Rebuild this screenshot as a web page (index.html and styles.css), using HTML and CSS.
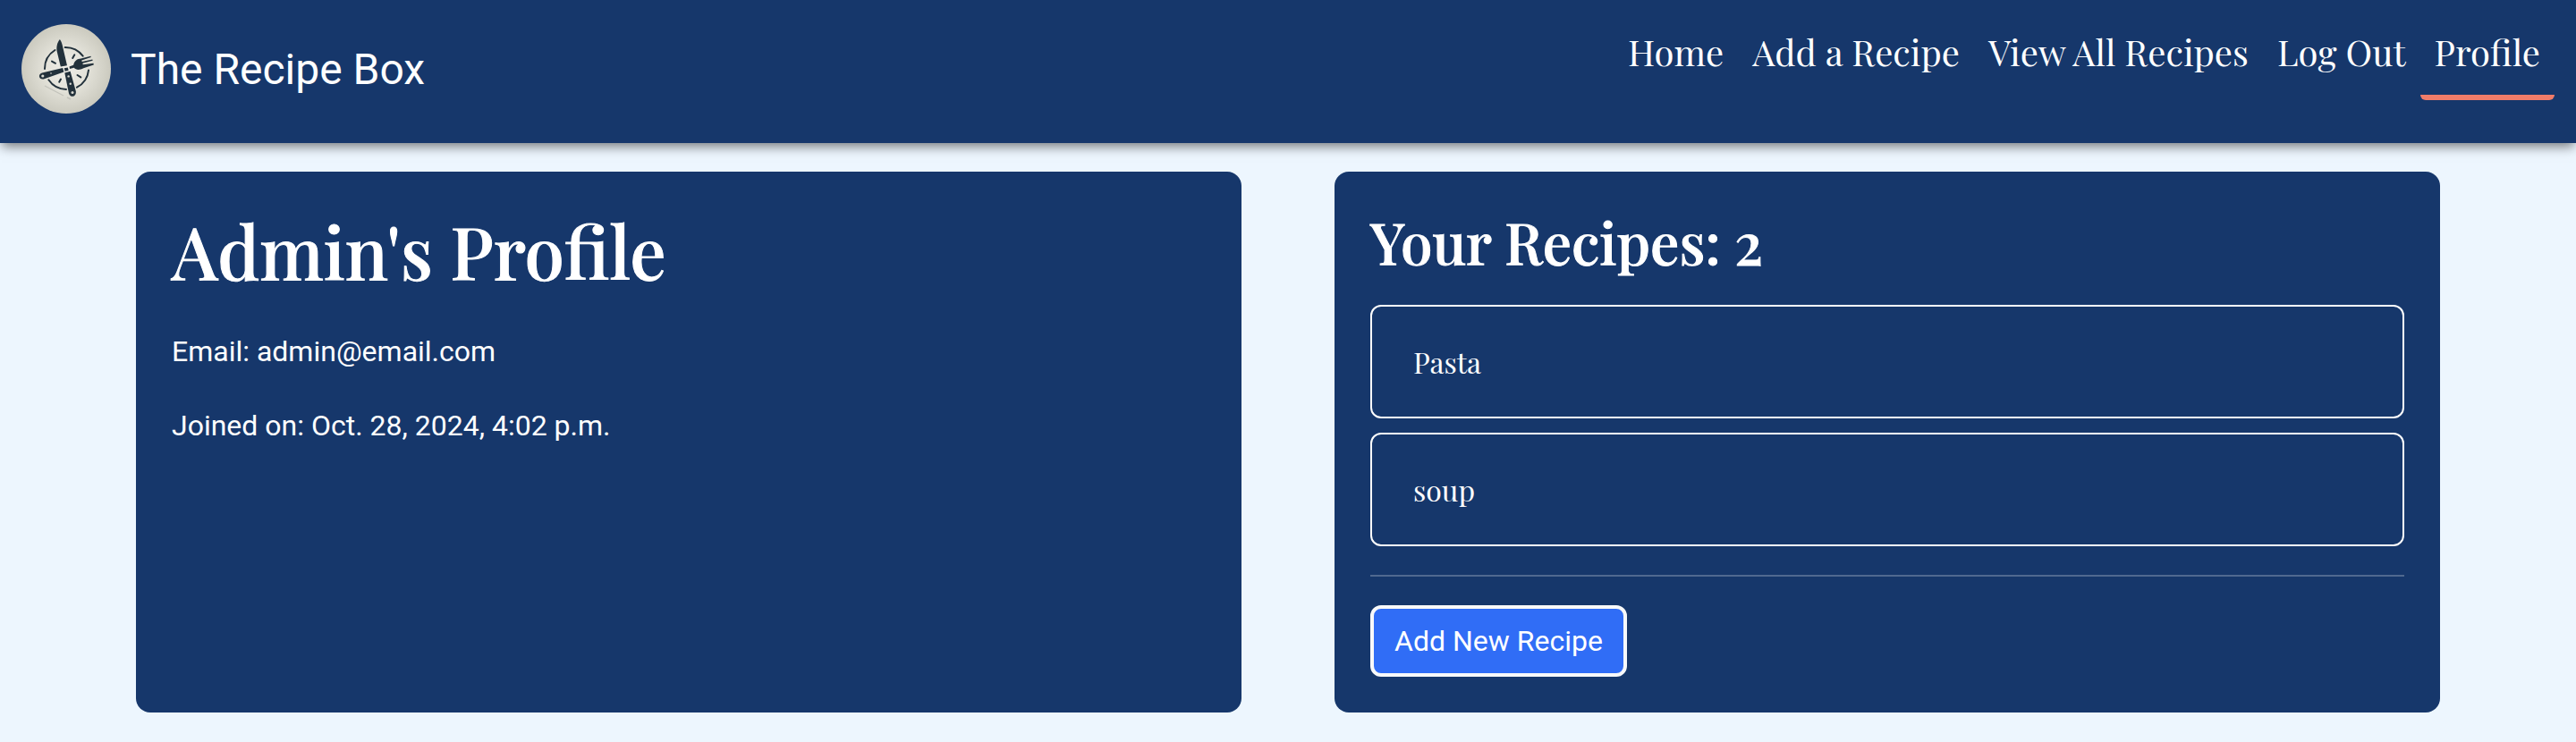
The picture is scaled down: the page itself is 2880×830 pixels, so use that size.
FILE: index.html
```html
<!DOCTYPE html>
<html lang="en">
<head>
  <meta charset="utf-8">
  <meta name="viewport" content="width=device-width, initial-scale=1">
  <title>The Recipe Box</title>
  <link rel="stylesheet" href="styles.css">
</head>
<body>
  <header class="navbar">
    <a class="brand" href="#">
      <svg class="brand-logo" viewBox="0 0 100 100" aria-hidden="true">
        <defs>
          <radialGradient id="disc">
            <stop offset="0" stop-color="#efeee8"/>
            <stop offset="0.5" stop-color="#e2e1d8"/>
            <stop offset="1" stop-color="#cbcabf"/>
          </radialGradient>
        </defs>
        <circle cx="50" cy="50" r="50" fill="url(#disc)"/>
        <path d="M26 69 47 80M51 82 55 84" stroke="#c3c3bb" stroke-width="1.4" fill="none"/>
        <g fill="none" stroke="#22313b" stroke-width="2" stroke-linecap="round">
          <path d="M26 50A24.5 24.5 0 0 1 37.5 29"/>
          <path d="M48.7 26A24.5 24.5 0 0 1 68.7 35.7"/>
          <path d="M75 51.5A24.5 24.5 0 0 1 62 70.7"/>
          <path d="M50 73A24.5 24.5 0 0 1 30.3 62.3"/>
          <path d="M34 41.6 38 43.8M59.3 34.3 57.2 38M62.5 57 66.3 59.4M44 61.5 42.2 64.7"/>
        </g>
        <g fill="#22313b">
          <path d="M42.9 17C39.6 21 38.8 26 39.8 31L43.8 47.6 51 46.2 46.3 26C45.5 22 44.5 19 42.9 17Z"/>
          <path d="M47.8 49.3 51.8 48.4 52.6 51.8 48.6 52.8Z"/>
          <path d="M48.3 54.4 54.6 52.8 60.8 75C61.7 81.5 54.6 82.8 53 77.4Z"/>
          <path d="M46.2 49 47.4 53.6 24.8 61.4C19.4 62.4 18 55.8 23 54.4Z"/>
          <path d="M53.5 47.6 58.2 45.8C58.8 40.8 62.6 38.6 66.5 38.4L77.4 35.7 77.8 37 67.3 40.6 67.7 42 79.3 39.4 79.7 40.8 68.4 43.8 68.7 45.2 80.5 43.8 80.8 45.4 69.4 49.2C65 51.6 61 51.4 58.8 48.8L54 50Z"/>
        </g>
        <g fill="#d9d9d1">
          <circle cx="23.8" cy="58" r="1.6"/>
          <circle cx="33" cy="55" r="0.8"/>
          <circle cx="52.6" cy="58.4" r="1.2"/>
          <circle cx="54.7" cy="66.8" r="1.2"/>
          <circle cx="57" cy="76.5" r="1.5"/>
        </g>
      </svg>
      <span class="brand-name">The Recipe Box</span>
    </a>
    <nav aria-label="Main">
      <ul class="nav-list">
        <li><a class="nav-link" href="#">Home</a></li>
        <li><a class="nav-link" href="#">Add a Recipe</a></li>
        <li><a class="nav-link" href="#">View All Recipes</a></li>
        <li><a class="nav-link" href="#">Log Out</a></li>
        <li><a class="nav-link nav-link-active" href="#" aria-current="page">Profile</a></li>
      </ul>
    </nav>
  </header>

  <main class="profile">
    <section class="card">
      <h1 class="title">Admin's Profile</h1>
      <p class="detail">Email: admin@email.com</p>
      <p class="detail">Joined on: Oct. 28, 2024, 4:02 p.m.</p>
    </section>

    <section class="card">
      <h2 class="subtitle">Your Recipes: 2</h2>
      <ul class="recipes">
        <li><a class="recipe" href="#">Pasta</a></li>
        <li><a class="recipe" href="#">soup</a></li>
      </ul>
      <hr class="divider">
      <button class="add-button" type="button">Add New Recipe</button>
    </section>
  </main>
</body>
</html>
```

FILE: styles.css
```css
:root {
  --navy: #16376b;
  --page: #edf6fe;
  --accent: #f07c69;
  --blue: #306df6;
  --serif: "Playfair Display", "Liberation Serif", serif;
  --sans: Roboto, "Liberation Sans", sans-serif;
}

* {
  box-sizing: border-box;
}

body {
  margin: 0;
  background: var(--page);
  color: #fff;
  font-family: var(--sans);
  font-size: 32px;
  line-height: 51px;
}

a {
  color: inherit;
  text-decoration: none;
}

ul {
  list-style: none;
  margin: 0;
  padding: 0;
}

.navbar {
  display: flex;
  justify-content: space-between;
  align-items: flex-start;
  padding: 27px 24px 33px;
  background: var(--navy);
  box-shadow: 0 6px 12px -2px rgba(0, 0, 0, 0.5);
}

.brand {
  display: flex;
  align-items: center;
  gap: 22px;
}

.brand-logo {
  width: 100px;
  height: 100px;
}

.brand-name {
  font-size: 48px;
}

.nav-list {
  display: flex;
}

.nav-link {
  display: block;
  padding: 0 16px 17px;
  border-bottom: 6px solid transparent;
  border-radius: 6px;
  font-family: var(--serif);
  font-size: 40px;
  line-height: 62px;
  white-space: nowrap;
}

.nav-link-active {
  border-bottom-color: var(--accent);
}

.profile {
  display: grid;
  grid-template-columns: 1fr 1fr;
  gap: 104px;
  padding: 32px 152px;
}

.card {
  padding: 40px;
  border-radius: 16px;
  background: var(--navy);
}

.title,
.subtitle {
  margin: 0;
  font-family: var(--serif);
  font-weight: 500;
  -webkit-text-stroke: 1px #fff;
}

.title {
  margin-bottom: 40px;
  font-size: 80px;
  line-height: 96px;
}

.subtitle {
  margin-bottom: 33px;
  font-size: 64px;
  line-height: 76px;
}

.detail {
  margin: 0 0 32px;
}

.recipes {
  display: grid;
  gap: 16px;
}

.recipe {
  display: block;
  padding: 36px 46px;
  border: 2px solid #fff;
  border-radius: 12px;
  font-family: var(--serif);
}

.divider {
  margin: 32px 0;
  border: 0;
  border-top: 2px solid #fff;
  opacity: 0.25;
}

.add-button {
  display: block;
  padding: 12px 23px;
  border: 4px solid #f8f9fa;
  border-radius: 12px;
  background: var(--blue);
  color: #fff;
  font-family: var(--sans);
  font-size: 32px;
  line-height: 48px;
}
```
